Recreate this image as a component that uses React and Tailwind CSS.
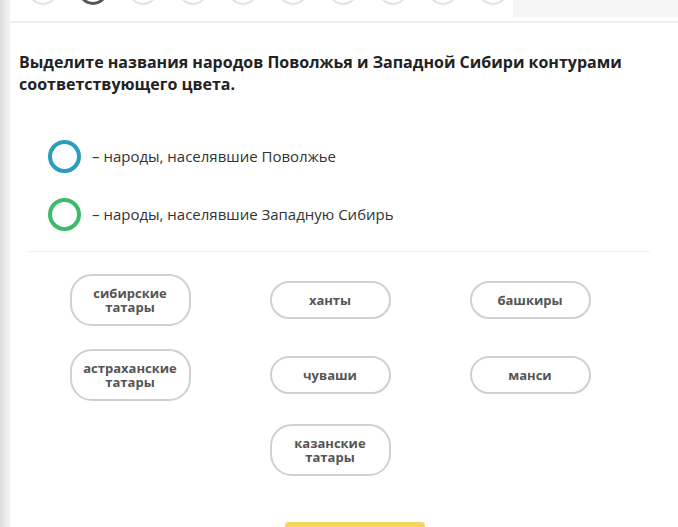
import React from 'react';

const steps = [0, 1, 2, 3, 4, 5, 6, 7, 8, 9];

const cells = [
  'сибирские татары', 'ханты', 'башкиры',
  'астраханские татары', 'чуваши', 'манси',
  null, 'казанские татары', null,
];

const Pill = ({ label }) => {
  const twoLine = label.includes(' ');
  return (
    <div
      className={`w-[121px] ${twoLine ? 'h-[52px]' : 'h-[38px]'} rounded-[22px] border-2 border-[#d0d0d0] bg-white flex flex-col items-center justify-center text-center text-[13px] leading-[14px] font-bold text-[#555]`}
    >
      {label.split(' ').map((w) => (
        <div key={w}>{w}</div>
      ))}
    </div>
  );
};

const App = () => {
  return (
    <div className="flex min-h-[527px] h-[527px] overflow-hidden bg-white" style={{ fontFamily: '"Open Sans", "Noto Sans", sans-serif' }}>
      {/* left shadow strip */}
      <div className="w-[10px] shrink-0 bg-gradient-to-r from-[#dcdcdc] to-[#f4f4f4]" />

      <div className="flex-1 flex flex-col">
        {/* stepper */}
        <div className="h-[23px] shrink-0 border-b-2 border-[#eeeeee] flex items-start overflow-hidden">
          <div className="flex gap-[20px] pl-[18px] mt-[-25px]">
            {steps.map((i) => (
              <div
                key={i}
                className={`w-[30px] h-[30px] rounded-full bg-white ${i === 1 ? 'border-[3px] border-[#555]' : 'border-2 border-[#e2e2e2]'}`}
              />
            ))}
          </div>
          <div className="ml-auto w-[165px] h-[17px] bg-[#f5f5f5]" />
        </div>

        {/* question */}
        <h1 className="mt-[28px] pl-[9px] pr-[30px] text-[16px] leading-[22px] font-bold text-[#222]">
          Выделите названия народов Поволжья и Западной Сибири контурами соответствующего цвета.
        </h1>

        {/* legend */}
        <div className="mt-[45px] pl-[38px] flex flex-col gap-[25px]">
          <div className="flex items-center gap-[11px]">
            <div className="w-[33px] h-[33px] rounded-full border-4 border-[#2b9cbd]" />
            <span className="text-[15px] text-[#333]">– народы, населявшие Поволжье</span>
          </div>
          <div className="flex items-center gap-[11px]">
            <div className="w-[33px] h-[33px] rounded-full border-4 border-[#3dbb6a]" />
            <span className="text-[15px] text-[#333]">– народы, населявшие Западную Сибирь</span>
          </div>
        </div>

        {/* divider */}
        <div className="mt-[20px] ml-[18px] w-[622px] h-[2px] bg-[#efefef]" />

        {/* answers */}
        <div className="mt-[22px] ml-[20px] grid grid-cols-[200px_200px_200px] gap-y-[23px]">
          {cells.map((c, i) => (
            <div key={i} className="flex items-center justify-center h-[52px]">
              {c && <Pill label={c} />}
            </div>
          ))}
        </div>

        {/* button */}
        <div className="mt-[46px] ml-[275px] w-[140px] h-[10px] rounded-t-[4px] bg-[#f6d45e]" />
      </div>
    </div>
  );
};

export default App;
